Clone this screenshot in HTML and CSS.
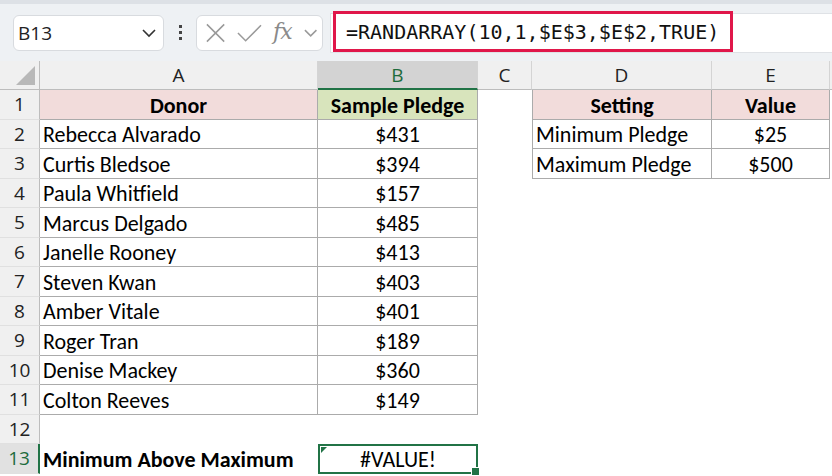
FILE: index.html
```html
<!DOCTYPE html>
<html>
<head>
<meta charset="utf-8">
<link rel="stylesheet" href="styles.css">
</head>
<body>
<div class="app">
  <div class="toolbar">
    <div class="namebox">
      <span class="name">B13</span>
      <svg class="chev" width="16" height="10" viewBox="0 0 16 10"><path d="M2 2 L8 8 L14 2" fill="none" stroke="#333" stroke-width="1.6"/></svg>
    </div>
    <div class="dots"><i></i><i></i><i></i></div>
    <div class="fxbox">
      <svg width="22" height="22" viewBox="0 0 22 22"><path d="M2 2 L20 20 M20 2 L2 20" stroke="#9a9a9a" stroke-width="1.6" fill="none"/></svg>
      <svg width="26" height="20" viewBox="0 0 26 20"><path d="M1 10 L9 18 L25 2" stroke="#9a9a9a" stroke-width="1.6" fill="none"/></svg>
      <span class="fx">fx</span>
      <svg width="16" height="10" viewBox="0 0 16 10"><path d="M2 2 L8 8 L14 2" fill="none" stroke="#9a9a9a" stroke-width="1.6"/></svg>
    </div>
    <div class="formula">
      <div class="formula-hl">=RANDARRAY(10,1,$E$3,$E$2,TRUE)</div>
    </div>
  </div>
  <div class="sheet">
    <div class="ch corner"><span class="tri"></span></div>
    <div class="ch">A</div>
    <div class="ch sel">B</div>
    <div class="ch">C</div>
    <div class="ch">D</div>
    <div class="ch">E</div>
    <div class="ch"></div>

    <div class="rh">1</div>
    <div class="c b pink bold ctr">Donor</div>
    <div class="c b green bold ctr">Sample Pledge</div>
    <div class="c"></div>
    <div class="c b bl pink bold ctr">Setting</div>
    <div class="c b pink bold ctr">Value</div>
    <div class="c"></div>

    <div class="rh">2</div>
    <div class="c b">Rebecca Alvarado</div>
    <div class="c b ctr">$431</div>
    <div class="c"></div>
    <div class="c b bl">Minimum Pledge</div>
    <div class="c b ctr">$25</div>
    <div class="c"></div>

    <div class="rh">3</div>
    <div class="c b">Curtis Bledsoe</div>
    <div class="c b ctr">$394</div>
    <div class="c"></div>
    <div class="c b bl">Maximum Pledge</div>
    <div class="c b ctr">$500</div>
    <div class="c"></div>

    <div class="rh">4</div>
    <div class="c b">Paula Whitfield</div>
    <div class="c b ctr">$157</div>
    <div class="c"></div><div class="c"></div><div class="c"></div><div class="c"></div>

    <div class="rh">5</div>
    <div class="c b">Marcus Delgado</div>
    <div class="c b ctr">$485</div>
    <div class="c"></div><div class="c"></div><div class="c"></div><div class="c"></div>

    <div class="rh">6</div>
    <div class="c b">Janelle Rooney</div>
    <div class="c b ctr">$413</div>
    <div class="c"></div><div class="c"></div><div class="c"></div><div class="c"></div>

    <div class="rh">7</div>
    <div class="c b">Steven Kwan</div>
    <div class="c b ctr">$403</div>
    <div class="c"></div><div class="c"></div><div class="c"></div><div class="c"></div>

    <div class="rh">8</div>
    <div class="c b">Amber Vitale</div>
    <div class="c b ctr">$401</div>
    <div class="c"></div><div class="c"></div><div class="c"></div><div class="c"></div>

    <div class="rh">9</div>
    <div class="c b">Roger Tran</div>
    <div class="c b ctr">$189</div>
    <div class="c"></div><div class="c"></div><div class="c"></div><div class="c"></div>

    <div class="rh">10</div>
    <div class="c b">Denise Mackey</div>
    <div class="c b ctr">$360</div>
    <div class="c"></div><div class="c"></div><div class="c"></div><div class="c"></div>

    <div class="rh">11</div>
    <div class="c b">Colton Reeves</div>
    <div class="c b ctr">$149</div>
    <div class="c"></div><div class="c"></div><div class="c"></div><div class="c"></div>

    <div class="rh">12</div>
    <div class="c"></div><div class="c"></div><div class="c"></div><div class="c"></div><div class="c"></div><div class="c"></div>

    <div class="rh selrow">13</div>
    <div class="c bold">Minimum Above Maximum</div>
    <div class="c ctr active"><span class="err"></span>#VALUE!<span class="handle"></span></div>
    <div class="c"></div><div class="c"></div><div class="c"></div><div class="c"></div>
  </div>
</div>
</body>
</html>
```
FILE: styles.css
```css
html, body {
  margin: 0;
  padding: 0;
  background: #ffffff;
}
.app {
  width: 832px;
  height: 476px;
  overflow: hidden;
}
.toolbar {
  height: 61px;
  box-sizing: border-box;
  background: #eef1f4;
  border-top: 4px solid #dde1e6;
  display: flex;
  align-items: center;
  padding: 0 0 0 13px;
}
.namebox {
  width: 151px;
  height: 36px;
  box-sizing: border-box;
  background: #fff;
  border: 1px solid #d8dbdf;
  border-radius: 6px;
  display: flex;
  align-items: center;
  justify-content: space-between;
  padding: 0 6px 0 4px;
  font-family: "Open Sans", sans-serif;
  font-size: 19px;
  color: #222;
}
.dots {
  width: 32px;
  display: flex;
  flex-direction: column;
  align-items: center;
  gap: 3px;
}
.dots i {
  width: 3px;
  height: 3px;
  background: #444;
  display: block;
}
.fxbox {
  width: 127px;
  height: 36px;
  box-sizing: border-box;
  background: #fff;
  border: 1px solid #d8dbdf;
  border-radius: 6px;
  display: flex;
  align-items: center;
  gap: 11px;
  padding: 0 4px 0 8px;
}
.fx {
  font-family: "DejaVu Serif", serif;
  font-style: italic;
  font-size: 22px;
  color: #8a8a8a;
  letter-spacing: -1px;
  margin-top: -2px;
}
.formula {
  margin-left: 7px;
  flex: 1;
  height: 38px;
  background: #fff;
  border: 1px solid #dfe2e6;
  border-right: none;
  display: flex;
  align-items: center;
  position: relative;
}
.formula-hl {
  position: absolute;
  left: 2px;
  top: -3px;
  width: 400px;
  height: 41px;
  box-sizing: border-box;
  border: 3px solid #e0174a;
  font-family: "DejaVu Sans Mono", monospace;
  font-size: 20px;
  color: #111;
  display: flex;
  align-items: center;
  padding: 2px 0 0 10px;
}
.sheet {
  display: grid;
  grid-template-columns: 40px 278px 160px 54px 180px 118px 1fr;
  grid-template-rows: 29px repeat(13, 29.5px);
  font-family: Carlito, Lato, sans-serif;
  font-size: 22px;
  color: #000;
}
.ch {
  background: #f0f0f0;
  border-right: 1px solid #d4d4d4;
  border-bottom: 1px solid #bdbdbd;
  box-sizing: border-box;
  display: flex;
  align-items: center;
  justify-content: center;
  font-family: "Open Sans", sans-serif;
  font-size: 19px;
  color: #222;
}
.ch.sel {
  background: #d3d3d3;
  color: #1e6b3c;
  border-bottom: 2px solid #217346;
}
.corner {
  position: relative;
  border-right: 1px solid #bdbdbd;
}
.tri {
  position: absolute;
  right: 4px;
  bottom: 4px;
  width: 0;
  height: 0;
  border-left: 19px solid transparent;
  border-bottom: 19px solid #b8b8b8;
}
.rh {
  background: #f0f0f0;
  border-right: 1px solid #bdbdbd;
  border-bottom: 1px solid #e0e0e0;
  box-sizing: border-box;
  display: flex;
  align-items: center;
  justify-content: center;
  font-family: "Open Sans", sans-serif;
  font-size: 19px;
  color: #222;
}
.rh.selrow {
  background: #e1e1e1;
  color: #1e6b3c;
  border-right: 2px solid #217346;
}
.c {
  box-sizing: border-box;
  display: flex;
  align-items: center;
  padding: 2px 0 0 3px;
  white-space: nowrap;
  overflow: visible;
}
.c.b {
  border-right: 1px solid #ababab;
  border-bottom: 1px solid #ababab;
}
.c.bl {
  border-left: 1px solid #ababab;
}
.ctr {
  justify-content: center;
  padding-left: 0;
}
.bold {
  font-weight: bold;
}
.pink {
  background: #f2dcdb;
}
.green {
  background: #d8e4bc;
}
.active {
  border: 2px solid #217346;
  position: relative;
}
.err {
  position: absolute;
  left: 1px;
  top: 1px;
  width: 0;
  height: 0;
  border-top: 6px solid #217346;
  border-right: 6px solid transparent;
}
.handle {
  position: absolute;
  right: -4px;
  bottom: -4px;
  width: 7px;
  height: 7px;
  background: #217346;
  border: 1px solid #fff;
}
```
